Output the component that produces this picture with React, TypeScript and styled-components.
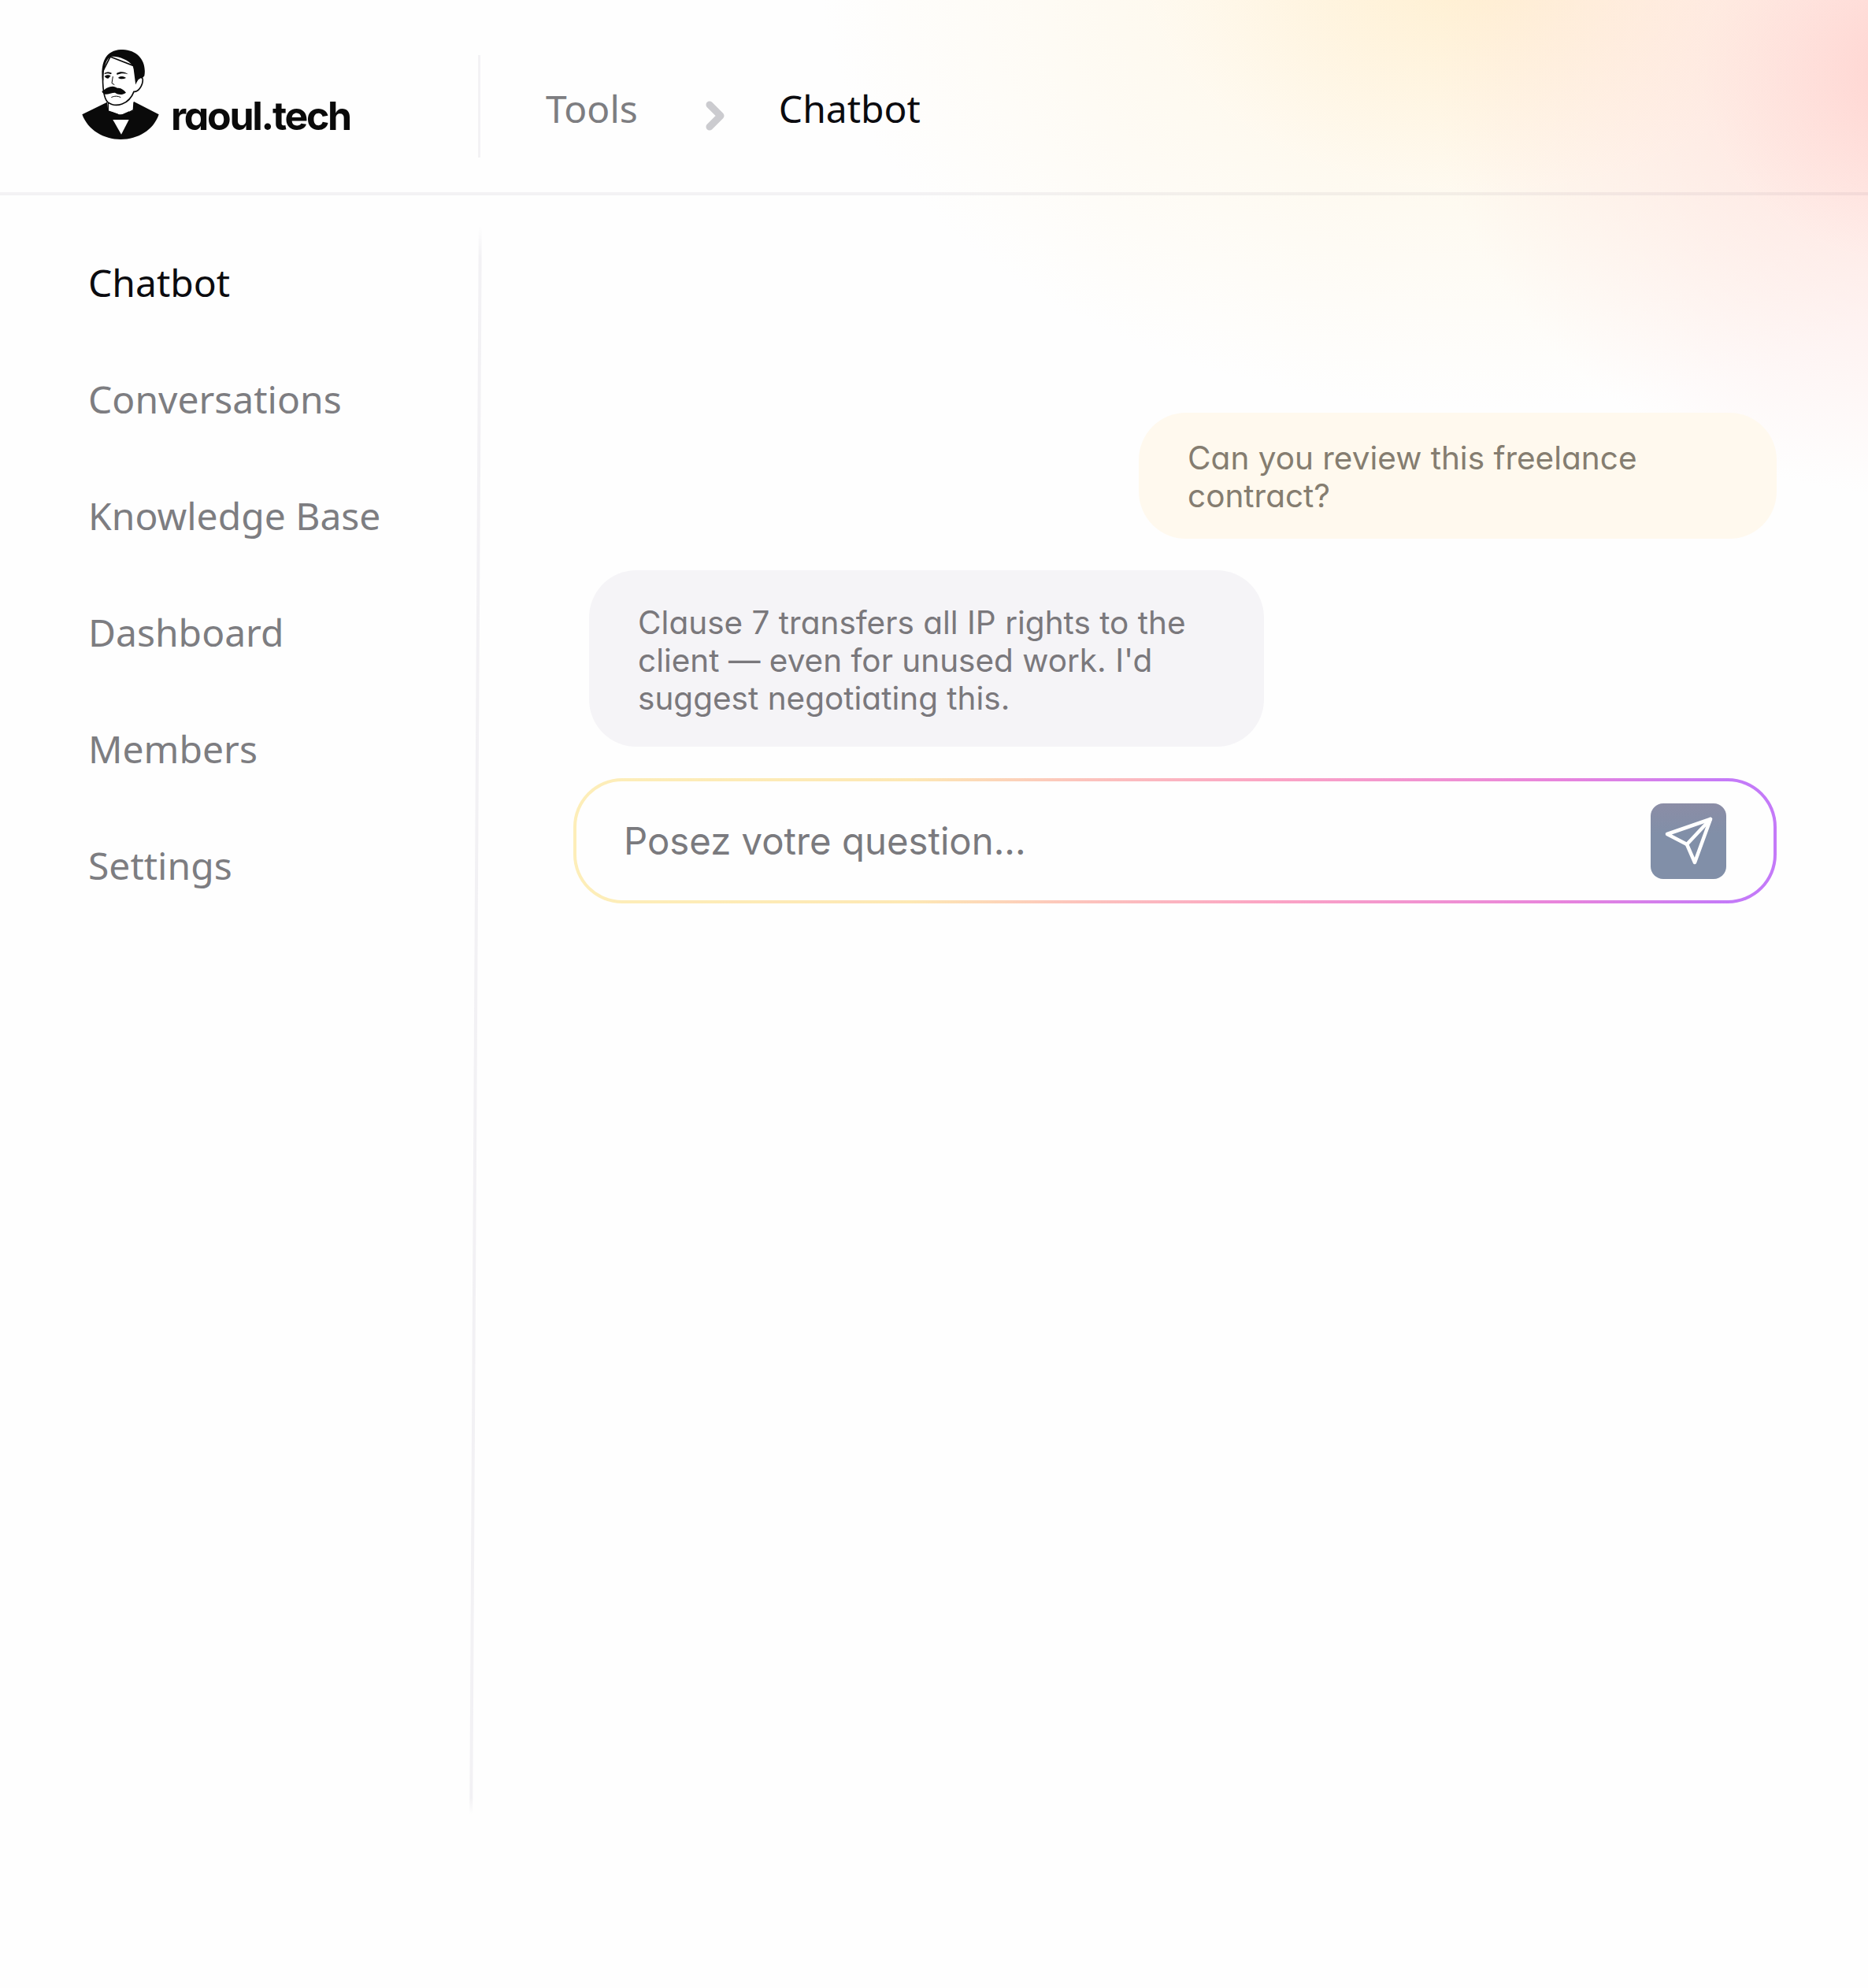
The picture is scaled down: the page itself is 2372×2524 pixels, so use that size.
import React from "react";
import styled, { createGlobalStyle } from "styled-components";

const GlobalStyle = createGlobalStyle`
  html, body {
    margin: 0;
    padding: 0;
    background: #fefefe;
  }
  * {
    box-sizing: border-box;
  }
`;

const NAV_ITEMS = ["Chatbot", "Conversations", "Knowledge Base", "Dashboard", "Members", "Settings"];

function Portrait() {
  return (
    <LogoMark viewBox="133 98 292 342">
      <path
        fill="#0a0a0a"
        d="M133 345 L228 298 L262 332 L282 340 L305 330 L330 296 L425 345 C405 405 345 440 280 440 C215 440 155 405 133 345 Z"
      />
      <path fill="#fff" d="M228 298 L232 332 L272 345 L296 345 L330 328 L330 290 L290 270 L240 275 Z" />
      <path fill="none" stroke="#0a0a0a" strokeWidth="4" d="M232 300 L232 332 L270 345 M330 298 L328 328 L296 345" />
      <path fill="#0a0a0a" d="M246 335 L278 348 L312 333 L314 366 L280 358 L246 366 Z" />
      <path fill="#fff" d="M250 365 L311 365 L282 421 Z" />
      <path
        fill="#fff"
        stroke="#0a0a0a"
        strokeWidth="5"
        d="M212 180 C210 235 212 280 230 298 C262 322 312 306 330 258 C346 260 364 236 364 212 C362 198 346 204 338 222 L330 160 L240 125 Z"
      />
      <path
        fill="#0a0a0a"
        d="M210 215 C204 155 216 102 280 98 C342 96 380 140 370 198 L363 206 C350 200 342 210 337 226 C336 200 334 178 326 160 C306 134 262 120 240 126 C222 136 214 172 214 215 Z"
      />
      <path
        fill="#0a0a0a"
        d="M208 258 C218 250 230 238 250 238 C262 240 268 246 272 244 C282 245 294 252 300 262 C285 272 270 270 258 262 C245 262 230 270 220 268 C214 266 210 262 208 258 Z"
      />
      <path fill="#0a0a0a" d="M218 200 C224 193 236 193 242 198 L232 208 C226 208 222 205 218 200 Z" />
      <path fill="#0a0a0a" d="M270 206 C276 198 290 198 300 206 C290 211 278 211 270 206 Z" />
      <path fill="#0a0a0a" d="M218 188 C226 182 238 182 246 188 L242 192 C234 188 226 188 218 192 Z" />
      <path fill="#0a0a0a" d="M264 188 C278 180 296 182 308 192 C294 187 280 187 266 194 Z" />
      <path fill="none" stroke="#0a0a0a" strokeWidth="3" d="M250 200 L246 226 L256 232" />
      <path fill="none" stroke="#0a0a0a" strokeWidth="3" d="M244 280 C256 274 268 274 280 280" />
    </LogoMark>
  );
}

export default function App() {
  return (
    <Page>
      <GlobalStyle />
      <Header>
        <Logo>
          <Portrait />
          <LogoText>raoul.tech</LogoText>
        </Logo>
        <HeaderDivider />
        <Crumbs>
          <Crumb>Tools</Crumb>
          <Chevron viewBox="0 0 24 38">
            <path d="M5 5 L19 19 L5 33" />
          </Chevron>
          <Crumb $active>Chatbot</Crumb>
        </Crumbs>
      </Header>
      <Body>
        <Sidebar>
          {NAV_ITEMS.map((item, i) => (
            <NavItem key={item} $active={i === 0}>
              {item}
            </NavItem>
          ))}
        </Sidebar>
        <SideDivider />
        <Main>
          <UserBubble>Can you review this freelance contract?</UserBubble>
          <BotBubble>Clause 7 transfers all IP rights to the client — even for unused work. I'd suggest negotiating this.</BotBubble>
          <InputBox>
            <InputInner>
              <QuestionInput placeholder="Posez votre question..." />
              <SendButton>
                <svg width="96" height="96" viewBox="0 0 96 96" fill="none" stroke="#fff" strokeWidth="4.5" strokeLinejoin="round" strokeLinecap="round">
                  <path d="M76 20 L21 39 L46 52 L56 75 Z" />
                  <path d="M76 20 L46 52" />
                </svg>
              </SendButton>
            </InputInner>
          </InputBox>
        </Main>
      </Body>
    </Page>
  );
}

const Page = styled.div`
  width: 2372px;
  height: 2524px;
  overflow: hidden;
  background:
    radial-gradient(ellipse 620px 540px at 2440px 90px, rgba(255, 208, 205, 0.95) 0%, rgba(255, 222, 218, 0.5) 45%, rgba(255, 238, 240, 0) 100%),
    radial-gradient(ellipse 840px 560px at 1880px -40px, rgba(255, 238, 205, 0.95) 0%, rgba(255, 245, 225, 0.5) 50%, rgba(255, 250, 245, 0) 100%),
    #fefefe;
`;

const Header = styled.header`
  display: flex;
  align-items: center;
  height: 248px;
  border-bottom: 4px solid rgba(70, 50, 90, 0.06);
`;

const Logo = styled.div`
  display: flex;
  align-items: flex-end;
  gap: 15px;
  width: 607px;
  padding: 0 0 3px 104px;
  height: 114px;
  margin-top: 2px;
`;

const LogoMark = styled.svg`
  width: 98px;
  height: 114px;
  flex: none;
`;

const LogoText = styled.span`
  font-family: Inter, sans-serif;
  font-feature-settings: "cv11";
  font-size: 50px;
  font-weight: 700;
  line-height: 50px;
  letter-spacing: -2.3px;
  color: #0a0a0a;
  margin-bottom: 5px;
`;

const HeaderDivider = styled.div`
  width: 3px;
  height: 130px;
  flex: none;
  margin-top: 26px;
  background: #f3f2f5;
`;

const Crumbs = styled.nav`
  display: flex;
  align-items: center;
  padding-left: 83px;
  margin-top: 32px;
`;

const Crumb = styled.span<{ $active?: boolean }>`
  font-family: "Noto Sans", sans-serif;
  font-size: 48px;
  line-height: 68px;
  color: ${(p) => (p.$active ? "#0b0b0f" : "#7d7d81")};
`;

const Chevron = styled.svg`
  width: 24px;
  height: 38px;
  margin: 18px 69px 0 86px;
  fill: none;
  stroke: #cbcbcf;
  stroke-width: 9;
  stroke-linecap: round;
  stroke-linejoin: round;
`;

const Body = styled.div`
  display: flex;
  align-items: flex-start;
`;

const Sidebar = styled.aside`
  width: 602px;
  flex: none;
  display: flex;
  flex-direction: column;
  gap: 80px;
  padding: 77px 0 0 112px;
`;

const NavItem = styled.a<{ $active?: boolean }>`
  font-family: "Noto Sans", sans-serif;
  font-size: 48px;
  line-height: 68px;
  color: ${(p) => (p.$active ? "#0b0b0f" : "#7d7d81")};
`;

const SideDivider = styled.div`
  width: 4px;
  height: 2016px;
  flex: none;
  margin-top: 39px;
  background: linear-gradient(180deg, rgba(242, 241, 244, 0), #f2f1f4 2%, #f2f1f4 99%, rgba(242, 241, 244, 0));
  transform: rotate(0.33deg);
`;

const Main = styled.main`
  flex: 1;
  display: flex;
  flex-direction: column;
  gap: 40px;
  padding: 276px 116px 0 122px;
`;

const Bubble = styled.div`
  font-family: Inter, sans-serif;
  font-feature-settings: "cv11";
  font-size: 40.5px;
  line-height: 48px;
  border-radius: 60px;
`;

const UserBubble = styled(Bubble)`
  align-self: flex-end;
  width: 810px;
  padding: 34px 62px 30px;
  background: #fff9ee;
  color: #857d70;
`;

const BotBubble = styled(Bubble)`
  width: 857px;
  margin-left: 20px;
  padding: 43px 62px 37px;
  background: #f5f4f7;
  color: #7a787c;
`;

const InputBox = styled.div`
  height: 159px;
  padding: 4px;
  border-radius: 62px;
  background: linear-gradient(90deg, #fdeeb9 0%, #fde8b4 28%, #fcc4bc 42%, #fba4c4 58%, #e884dc 82%, #c47af8 96%);
`;

const InputInner = styled.div`
  display: flex;
  align-items: center;
  height: 100%;
  padding: 0 60px 0 58px;
  border-radius: 58px;
  background: #fefefe;
`;

const QuestionInput = styled.input`
  flex: 1;
  border: 0;
  outline: 0;
  background: transparent;
  font-family: Inter, sans-serif;
  font-feature-settings: "cv11";
  font-size: 47.3px;
  color: #7a7a7e;

  &::placeholder {
    color: #7a7a7e;
    opacity: 1;
  }
`;

const SendButton = styled.button`
  width: 96px;
  height: 96px;
  flex: none;
  padding: 0;
  border: 0;
  border-radius: 16px;
  background: linear-gradient(180deg, #8b8da6, #818fa8 40%);
`;
